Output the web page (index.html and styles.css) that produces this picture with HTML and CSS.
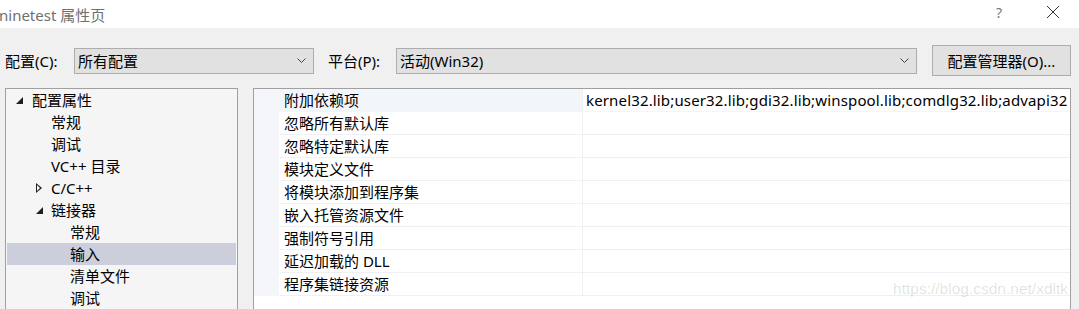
FILE: index.html
```html
<!DOCTYPE html>
<html lang="zh-CN">
<head>
    <meta charset="UTF-8">
    <title>ninetest 属性页</title>
    <link rel="stylesheet" href="styles.css">
</head>
<body>

<div class="titlebar">
    <span class="title">ninetest 属性页</span>
    <span class="help">?</span>
    <span class="close">
        <svg width="14" height="14" viewBox="0 0 14 14"><path d="M1 1 L13 13 M13 1 L1 13" stroke="#333" stroke-width="1"/></svg>
    </span>
</div>

<div class="main">
    <div class="toolbar">
        <label class="lbl">配置(C):</label>
        <div class="combo combo-config">
            <span>所有配置</span>
            <svg class="chev" width="9" height="5" viewBox="0 0 9 5"><path d="M0.5 0.5 L4.5 4.5 L8.5 0.5" fill="none" stroke="#444"/></svg>
        </div>
        <label class="lbl lbl-plat">平台(P):</label>
        <div class="combo combo-plat">
            <span>活动(Win32)</span>
            <svg class="chev" width="9" height="5" viewBox="0 0 9 5"><path d="M0.5 0.5 L4.5 4.5 L8.5 0.5" fill="none" stroke="#444"/></svg>
        </div>
        <div class="btn">配置管理器(O)...</div>
    </div>

    <div class="panels">
        <!-- 左侧树 -->
        <div class="tree">
            <div class="node lv0"><span class="tri open"></span>配置属性</div>
            <div class="node lv1">常规</div>
            <div class="node lv1">调试</div>
            <div class="node lv1">VC++ 目录</div>
            <div class="node lv1"><span class="tri closed"></span>C/C++</div>
            <div class="node lv1"><span class="tri open"></span>链接器</div>
            <div class="node lv2">常规</div>
            <div class="node lv2 selected">输入</div>
            <div class="node lv2">清单文件</div>
            <div class="node lv2">调试</div>
        </div>

        <!-- 属性表 -->
        <div class="grid">
            <div class="row first"><div class="gut"></div><div class="name">附加依赖项</div><div class="val">kernel32.lib;user32.lib;gdi32.lib;winspool.lib;comdlg32.lib;advapi32</div></div>
            <div class="row"><div class="gut"></div><div class="name">忽略所有默认库</div><div class="val"></div></div>
            <div class="row"><div class="gut"></div><div class="name">忽略特定默认库</div><div class="val"></div></div>
            <div class="row"><div class="gut"></div><div class="name">模块定义文件</div><div class="val"></div></div>
            <div class="row"><div class="gut"></div><div class="name">将模块添加到程序集</div><div class="val"></div></div>
            <div class="row"><div class="gut"></div><div class="name">嵌入托管资源文件</div><div class="val"></div></div>
            <div class="row"><div class="gut"></div><div class="name">强制符号引用</div><div class="val"></div></div>
            <div class="row"><div class="gut"></div><div class="name">延迟加载的 DLL</div><div class="val"></div></div>
            <div class="row"><div class="gut"></div><div class="name">程序集链接资源</div><div class="val"></div></div>
        </div>
    </div>
</div>

<div class="watermark">https://blog.csdn.net/xdltk</div>

</body>
</html>
```

FILE: styles.css
```css
body {
    margin: 0;
    padding: 0;
    width: 1079px;
    height: 309px;
    overflow: hidden;
    font-family: "Noto Sans", "Noto Sans CJK SC", sans-serif;
    font-size: 15px;
    color: #000;
    background-color: #f0f0f0;
    position: relative;
}
.titlebar {
    height: 28px;
    background-color: #fff;
    display: flex;
    align-items: center;
    position: relative;
}
.title {
    margin-left: -1px;
    font-size: 15px;
    color: #6f6f6f;
}
.help {
    margin-left: auto;
    margin-right: 44px;
    color: #777;
    font-size: 14px;
    margin-top: -4px;
}
.close {
    margin-right: 19px;
    display: flex;
    margin-top: -4px;
}
.main {
    padding: 17px 0 0 5px;
}
.toolbar {
    display: flex;
    align-items: center;
    height: 31px;
}
.lbl {
    width: 69px;
}
.lbl-plat {
    margin-left: 14px;
    width: 68px;
}
.combo {
    height: 26px;
    box-sizing: border-box;
    border: 1px solid #adadad;
    background-color: #e1e1e1;
    display: flex;
    align-items: center;
    padding-left: 3px;
    padding-right: 7px;
}
.combo span {
    flex: 1;
}
.combo-config {
    width: 240px;
}
.combo-plat {
    width: 521px;
}
.btn {
    margin-left: 15px;
    width: 139px;
    height: 31px;
    box-sizing: border-box;
    border: 1px solid #adadad;
    background-color: #e1e1e1;
    display: flex;
    align-items: center;
    justify-content: center;
}
.panels {
    display: flex;
    margin-top: 12px;
    gap: 15px;
}
.tree {
    width: 233px;
    height: 222px;
    box-sizing: border-box;
    border: 1px solid #a0a0a0;
    border-bottom: none;
    background-color: #f5f5f5;
    padding: 0 1px;
    overflow: hidden;
}
.node {
    height: 22px;
    line-height: 22px;
    position: relative;
    white-space: nowrap;
}
.lv0 { padding-left: 25px; }
.lv1 { padding-left: 44px; }
.lv2 { padding-left: 63px; }
.selected {
    background-color: #cccedb;
}
.tri {
    position: absolute;
    top: 8px;
    width: 0;
    height: 0;
}
.lv0 .tri {
    left: 9px;
}
.lv1 .tri {
    left: 29px;
}
.tri.open {
    border-left: 7px solid transparent;
    border-bottom: 7px solid #1e1e1e;
}
.tri.closed {
    top: 6px;
    width: 5px;
    height: 9px;
}
.tri.closed::before {
    content: "";
    position: absolute;
    left: 0;
    top: 0;
    border-top: 5px solid transparent;
    border-bottom: 5px solid transparent;
    border-left: 6px solid #1e1e1e;
}
.tri.closed::after {
    content: "";
    position: absolute;
    left: 1px;
    top: 2px;
    border-top: 3px solid transparent;
    border-bottom: 3px solid transparent;
    border-left: 3px solid #f5f5f5;
}
.grid {
    width: 818px;
    height: 222px;
    box-sizing: border-box;
    border: 1px solid #a0a0a0;
    border-bottom: none;
    background-color: #fff;
    overflow: hidden;
}
.row {
    display: flex;
    height: 23px;
    box-sizing: border-box;
    border-bottom: 1px solid #f0f0f4;
}
.gut {
    width: 25px;
    background-color: #f4f6f9;
    margin-bottom: -1px;
}
.name {
    width: 304px;
    padding-left: 5px;
    box-sizing: border-box;
    line-height: 22px;
    border-right: 1px solid #f0f0f4;
    white-space: nowrap;
}
.val {
    flex: 1;
    padding-left: 3px;
    line-height: 22px;
    letter-spacing: 0.15px;
    white-space: nowrap;
    overflow: hidden;
}
.row.first {
    background-color: #f2f6fb;
    border-bottom-color: #f2f6fb;
}
.row.first .val {
    background-color: #fff;
}
.watermark {
    position: absolute;
    right: 11px;
    top: 280px;
    font-family: "Liberation Sans", Arial, sans-serif;
    font-size: 15.5px;
    color: rgba(0, 0, 0, 0.13);
}
```
